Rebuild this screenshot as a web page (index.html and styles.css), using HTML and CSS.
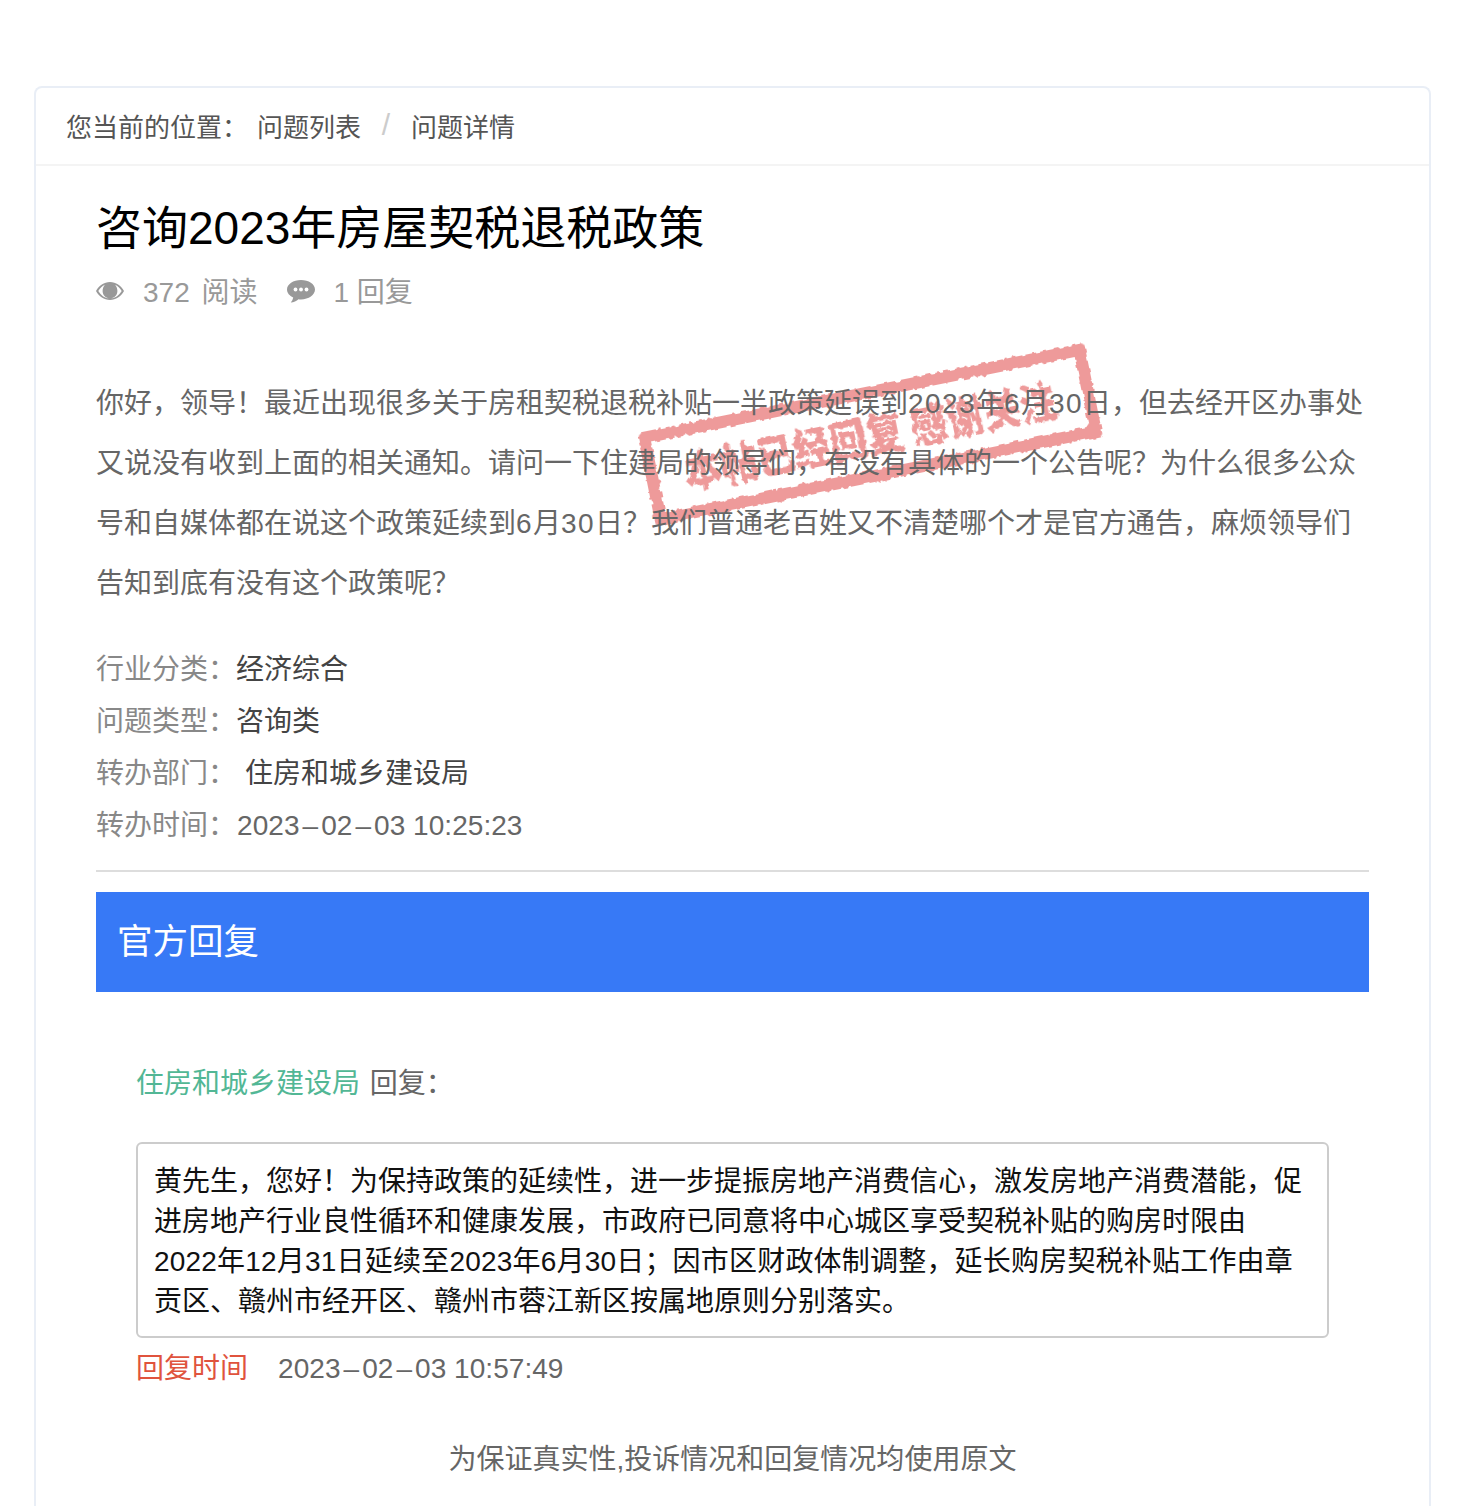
FILE: index.html
```html
<!DOCTYPE html>
<html lang="zh-CN">
<head>
    <meta charset="UTF-8" />
    <meta name="viewport" content="width=device-width, initial-scale=1" />
    <title>问题详情</title>
    <link rel="stylesheet" href="styles.css">
</head>
<body>
    <svg class="defs" width="0" height="0" aria-hidden="true">
        <filter id="rough" x="-5%" y="-10%" width="110%" height="120%">
            <feTurbulence type="fractalNoise" baseFrequency="0.16" numOctaves="2" seed="4" />
            <feDisplacementMap in="SourceGraphic" scale="6" />
            <feGaussianBlur stdDeviation="0.5" />
        </filter>
    </svg>
    <div class="card">
        <div class="crumbs">
            <span class="crumb-label">您当前的位置：</span>
            <a class="crumb">问题列表</a>
            <span class="crumb-sep">/</span>
            <a class="crumb">问题详情</a>
        </div>
        <div class="content">
            <h1 class="title">咨询2023年房屋契税退税政策</h1>
            <div class="meta">
                <svg class="meta-icon meta-icon-eye" viewBox="0 0 28 20" width="28" height="20">
                    <path fill="#999" fill-rule="evenodd" d="M14 1C8 1 3 4.600 0 10c3 5.400 8 9 14 9s11-3.600 14-9C25 4.600 20 1 14 1zM14 17.400C9 17.400 5 14.500 2.300 10 4 7.100 6.300 5 9 3.800 7.500 5.200 6.600 7.500 6.600 10c0 4.200 3.300 7.400 7.400 7.400s7.400-3.200 7.400-7.400c0-2.500-.9-4.800-2.400-6.200 2.700 1.200 5 3.300 6.700 6.200C23 14.500 19 17.400 14 17.400z" />
                    <circle cx="14" cy="10" r="5.800" fill="#999" />
                </svg>
                <span class="meta-text meta-read">372 阅读</span>
                <svg class="meta-icon meta-icon-chat" viewBox="0 0 28 25" width="28" height="25">
                    <path fill="#999" d="M14 1C6.300 1 0 5.200 0 10.500c0 3.400 2.500 6.300 6.200 8-.3 1.900-1.200 3.500-2.400 5 3-.2 5.700-1.500 7.700-3.300.8.100 1.600.2 2.500.2 7.700 0 14-4.500 14-9.900S21.700 1 14 1z" />
                    <circle cx="8.500" cy="10.500" r="1.900" fill="#fff" />
                    <circle cx="14" cy="10.500" r="1.900" fill="#fff" />
                    <circle cx="19.500" cy="10.500" r="1.900" fill="#fff" />
                </svg>
                <span class="meta-text">1 回复</span>
            </div>
            <div class="question">
                <div class="stamp"><span class="stamp-text">本帖已经回复 感谢关注</span></div>
                <p class="question-text">你好，领导！最近出现很多关于房租契税退税补贴一半政策延误到<span class="num">2023</span>年<span class="num">6</span>月<span class="num">30</span>日，但去经开区办事处又说没有收到上面的相关通知。请问一下住建局的领导们，有没有具体的一个公告呢？为什么很多公众号和自媒体都在说这个政策延续到<span class="num">6</span>月<span class="num">30</span>日？我们普通老百姓又不清楚哪个才是官方通告，麻烦领导们告知到底有没有这个政策呢？</p>
            </div>
            <ul class="info">
                <li><span class="info-label">行业分类：</span><span class="info-value">经济综合</span></li>
                <li><span class="info-label">问题类型：</span><span class="info-value">咨询类</span></li>
                <li><span class="info-label">转办部门：</span><span class="info-value info-dept">住房和城乡建设局</span></li>
                <li><span class="info-label">转办时间：</span><span class="info-time date">2023<span class="dash">–</span>02<span class="dash">–</span>03 10:25:23</span></li>
            </ul>
            <div class="reply-bar">官方回复</div>
            <div class="reply">
                <div class="reply-from"><span class="reply-dept">住房和城乡建设局</span> 回复：</div>
                <div class="reply-box">黄先生，您好！为保持政策的延续性，进一步提振房地产消费信心，激发房地产消费潜能，促进房地产行业良性循环和健康发展，市政府已同意将中心城区享受契税补贴的购房时限由<div class="reply-line">2022年12月31日延续至2023年6月30日；因市区财政体制调整，延长购房契税补贴工作由章</div>贡区、赣州市经开区、赣州市蓉江新区按属地原则分别落实。</div>
                <div class="reply-time"><span class="reply-time-label">回复时间</span><span class="date">2023<span class="dash">–</span>02<span class="dash">–</span>03 10:57:49</span></div>
            </div>
            <p class="note">为保证真实性,投诉情况和回复情况均使用原文</p>
        </div>
    </div>
</body>
</html>
```

FILE: styles.css
```css
* {
    box-sizing: border-box;
}

body {
    margin: 0;
    padding: 86px 31px 0 34px;
    background-color: #fff;
    color: #666;
    font-family: 'Liberation Sans', 'Noto Sans CJK SC', sans-serif;
    font-size: 28px;
}

.defs {
    position: absolute;
}

.card {
    height: 1420px;
    border: 2px solid #e9eef6;
    border-bottom: none;
    border-radius: 8px 8px 0 0;
    background-color: #fff;
}

.crumbs {
    display: flex;
    align-items: center;
    height: 78px;
    padding: 0 30px 2px;
    border-bottom: 2px solid #f4f4f4;
    font-size: 26px;
    color: #555;
}

.crumb-label {
    width: 191px;
}

.crumb-sep {
    width: 50px;
    text-align: center;
    font-size: 30px;
    color: #ccc;
}

.content {
    padding: 0 60px;
}

.title {
    margin: 32px 0 0;
    font-size: 46px;
    font-weight: normal;
    line-height: 60px;
    color: #000;
}

.meta {
    display: flex;
    align-items: center;
    height: 60px;
    margin-top: 2px;
    color: #999;
}

.meta-read {
    word-spacing: 4px;
}

.meta-icon {
    margin-right: 19px;
}

.meta-icon-eye {
    margin-top: 2px;
}

.meta-icon-chat {
    margin-top: 3px;
    margin-left: 29px;
}

.question {
    position: relative;
    margin-top: 54px;
}

.stamp {
    position: absolute;
    top: 13px;
    left: 546px;
    display: flex;
    align-items: center;
    justify-content: center;
    width: 456px;
    height: 95px;
    border: 12px solid #ee9a9a;
    border-radius: 4px;
    color: #ee9a9a;
    transform: rotate(-11.4deg);
    filter: url(#rough);
}

.stamp-text {
    display: inline-block;
    font-family: 'Noto Sans CJK SC', sans-serif;
    font-size: 37px;
    font-weight: 900;
    line-height: 1;
    white-space: pre;
    transform: scaleY(1.2);
}

.question-text {
    position: relative;
    margin: 0;
    line-height: 60px;
}

.num {
    letter-spacing: 1.4px;
}

.date {
    letter-spacing: 0.05px;
}

.dash {
    margin: 0 3px;
}

.info {
    margin: 30px 0 0;
    padding: 0 0 18px;
    border-bottom: 2px solid #ddd;
    list-style: none;
    line-height: 52px;
}

.info-label {
    color: #888;
}

.info-value {
    color: #444;
}

.info-dept {
    margin-left: 9px;
}

.info-time {
    margin-left: 1px;
}

.reply-bar {
    height: 100px;
    margin-top: 20px;
    padding-left: 21px;
    background-color: #3779f6;
    color: #fff;
    font-size: 35.5px;
    line-height: 101px;
}

.reply {
    padding: 0 40px;
}

.reply-from {
    margin-top: 72px;
    line-height: 40px;
    word-spacing: 2px;
}

.reply-dept {
    color: #52b795;
}

.reply-box {
    margin-top: 38px;
    padding: 18px 22px 14px 16px;
    border: 2px solid #ccc;
    border-radius: 6px;
    color: #111;
    line-height: 40px;
}

.reply-line {
    letter-spacing: 0.2px;
    white-space: nowrap;
}

.reply-time {
    margin-top: 11px;
    line-height: 40px;
}

.reply-time-label {
    margin-right: 30px;
    color: #e0533d;
}

.note {
    margin: 51px 0 0;
    text-align: center;
    line-height: 40px;
}
```
